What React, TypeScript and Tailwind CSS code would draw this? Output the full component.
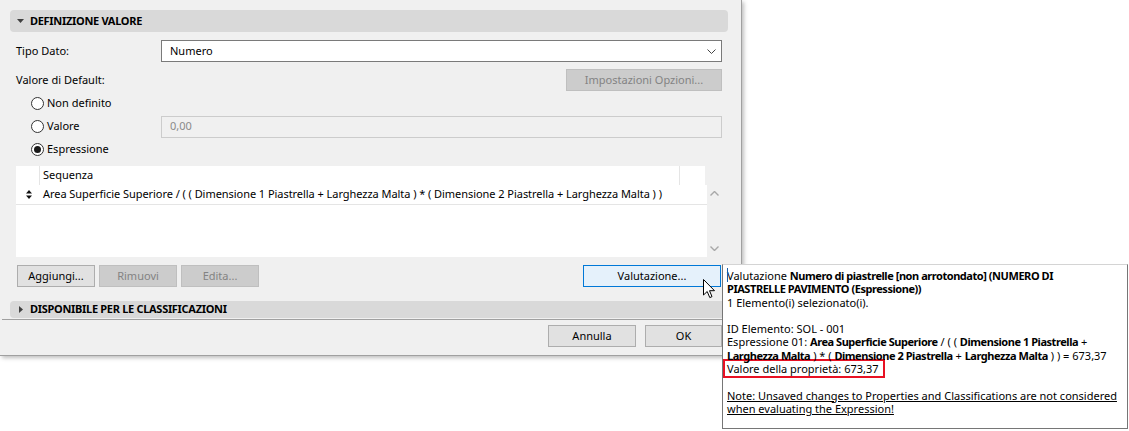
const Radio = ({ checked, label }: { checked?: boolean; label: string }) => (
  <div className="flex items-center gap-[3px] pl-[15px]">
    <span className="flex h-[13px] w-[13px] items-center justify-center rounded-full border border-[#333] bg-white">
      {checked && <span className="h-[7px] w-[7px] rounded-full bg-[#1a1a1a]" />}
    </span>
    <span>{label}</span>
  </div>
);

const Btn = ({
  label,
  width,
  disabled,
  focused,
}: {
  label: string;
  width: string;
  disabled?: boolean;
  focused?: boolean;
}) => {
  let look = "bg-[#e1e1e1] border-[#adadad] text-black";
  if (disabled) look = "bg-[#cccccc] border-[#bfbfbf] text-[#838383]";
  if (focused) look = "bg-[#e5f1fb] border-[#0078d7] text-black";
  return (
    <div className={`flex h-[22px] items-center justify-center border ${look} ${width}`}>
      {label}
    </div>
  );
};

const SectionHeader = ({ open, title, h }: { open?: boolean; title: string; h: string }) => (
  <div className={`ml-[-6px] mr-[-6px] flex items-center rounded-[4px] bg-[#d9d9d9] pl-[7px] ${h}`}>
    {open ? (
      <svg width="7" height="4" viewBox="0 0 7 4" className="mr-[6px]">
        <path d="M0 0 H7 L3.5 4 Z" fill="#404040" />
      </svg>
    ) : (
      <svg width="4" height="7" viewBox="0 0 4 7" className="ml-[2px] mr-[7px]">
        <path d="M0 0 V7 L4 3.5 Z" fill="#404040" />
      </svg>
    )}
    <span className="text-[11px] font-bold tracking-[-0.3px] text-black">{title}</span>
  </div>
);

const B = ({ children }: { children: React.ReactNode }) => (
  <b className="tracking-[-0.45px]">{children}</b>
);

export default function App() {
  return (
    <div
      className="relative h-[431px] w-[1129px] overflow-hidden bg-white text-[11px] text-black"
      style={{ fontFamily: '"Noto Sans", sans-serif' }}
    >
      {/* dialog */}
      <div className="flex h-[356px] w-[742px] flex-col border-b border-r border-[#a0a0a0] bg-[#f0f0f0] pt-[10px] shadow-[2px_2px_4px_rgba(0,0,0,0.25)]">
        <div className="flex flex-col pl-[16px] pr-[19px]">
          <SectionHeader open title="DEFINIZIONE VALORE" h="h-[22px]" />

          <div className="mt-[8px] flex h-[22px] items-center">
            <span className="w-[145px]">Tipo Dato:</span>
            <div className="flex h-full flex-1 items-center justify-between border border-[#7a7a7a] bg-white pl-[8px] pr-[5px]">
              <span>Numero</span>
              <svg width="9" height="5" viewBox="0 0 9 5">
                <path d="M0.5 0.5 L4.5 4.5 L8.5 0.5" fill="none" stroke="#444" strokeWidth="1" />
              </svg>
            </div>
          </div>

          <div className="mt-[7px] flex h-[22px] items-center justify-between">
            <span>Valore di Default:</span>
            <Btn label="Impostazioni Opzioni..." width="w-[156px]" disabled />
          </div>

          <div className="mt-[1px] flex h-[23px] items-center">
            <Radio label="Non definito" />
          </div>
          <div className="flex h-[23px] items-center">
            <div className="w-[145px]">
              <Radio label="Valore" />
            </div>
            <div className="flex h-[22px] flex-1 items-center border border-[#cccccc] bg-[#f0f0f0] pl-[8px] text-[#8a8a8a]">
              0,00
            </div>
          </div>
          <div className="flex h-[23px] items-center">
            <Radio checked label="Espressione" />
          </div>

          {/* sequence list */}
          <div className="mt-[5px] flex h-[91px] flex-col">
            <div className="flex h-[19px] w-[689px] bg-white">
              <div className="w-[24px] border-r border-[#e5e5e5]" />
              <div className="flex w-[640px] items-center border-r border-[#e5e5e5] pl-[3px]">Sequenza</div>
            </div>
            <div className="flex flex-1">
              <div className="flex-1 bg-white">
                <div className="flex h-[20px] items-center border-b border-[#e5e5e5]">
                  <div className="flex w-[25px] justify-center">
                    <svg width="6" height="9" viewBox="0 0 6 9">
                      <path d="M0 3.5 L3 0 L6 3.5 Z M0 5.5 L3 9 L6 5.5 Z" fill="#111" />
                    </svg>
                  </div>
                  <span className="pl-[2px] tracking-[-0.05px]">
                    Area Superficie Superiore / ( ( Dimensione 1 Piastrella + Larghezza Malta ) * ( Dimensione 2
                    Piastrella + Larghezza Malta ) )
                  </span>
                </div>
              </div>
              <div className="flex w-[15px] flex-col items-center justify-between py-[6px]">
                <svg width="9" height="5" viewBox="0 0 9 5">
                  <path d="M0.5 4.5 L4.5 0.5 L8.5 4.5" fill="none" stroke="#a8a8a8" strokeWidth="1.4" />
                </svg>
                <svg width="9" height="5" viewBox="0 0 9 5">
                  <path d="M0.5 0.5 L4.5 4.5 L8.5 0.5" fill="none" stroke="#a8a8a8" strokeWidth="1.4" />
                </svg>
              </div>
            </div>
          </div>

          <div className="mt-[8px] flex items-center gap-[4px] pl-[1px]">
            <Btn label="Aggiungi..." width="w-[78px]" />
            <Btn label="Rimuovi" width="w-[78px]" disabled />
            <Btn label="Edita..." width="w-[78px]" disabled />
            <div className="ml-auto mr-[1px]">
              <Btn label="Valutazione..." width="w-[138px]" focused />
            </div>
          </div>

          <div className="mt-[14px]">
            <SectionHeader title="DISPONIBILE PER LE CLASSIFICAZIONI" h="h-[17px]" />
          </div>
        </div>

        <div className="mt-[1px] ml-[2px] h-[1px] bg-[#a0a0a0]" />

        <div className="mt-[5px] flex justify-end gap-[9px] pr-[19px]">
          <Btn label="Annulla" width="w-[88px]" />
          <Btn label="OK" width="w-[77px]" />
        </div>
      </div>

      {/* mouse pointer */}
      <svg className="absolute left-[703px] top-[279px]" width="13" height="20" viewBox="0 0 13 20">
        <path
          d="M0.5 0.5 V16 L4.2 12.5 L6.8 18.6 L9 17.6 L6.5 11.7 L11.5 11.7 Z"
          fill="#fff"
          stroke="#000"
          strokeWidth="1"
          strokeLinejoin="round"
        />
      </svg>

      {/* evaluation popup */}
      <div className="absolute left-[722px] top-[264px] h-[165px] w-[406px] border border-[#767676] border-t-[#d4d4d4] bg-white pl-[4px] pt-[4px] leading-[13.3px] whitespace-nowrap">
        <span className="absolute left-[4px] top-[3px] h-[14px] w-px bg-[#1b5fa8]" />
        <div>
          Valutazione <B>Numero di piastrelle [non arrotondato] (NUMERO DI</B>
        </div>
        <div>
          <B>PIASTRELLE PAVIMENTO (Espressione))</B>
        </div>
        <div>1 Elemento(i) selezionato(i).</div>
        <div className="h-[13.3px]" />
        <div>ID Elemento: SOL - 001</div>
        <div>
          Espressione 01: <B>Area Superficie Superiore</B> / ( ( <B>Dimensione 1 Piastrella</B> +
        </div>
        <div>
          <B>Larghezza Malta</B> ) * ( <B>Dimensione 2 Piastrella</B> + <B>Larghezza Malta</B> ) ) = 673,37
        </div>
        <div className="ml-[-4px] mt-[-3px] mb-[-3px] w-[162px] border-2 border-[#e81123] py-[1px] pl-[2px]">
          Valore della proprietà: 673,37
        </div>
        <div className="h-[13.3px]" />
        <div className="underline">Note: Unsaved changes to Properties and Classifications are not considered</div>
        <div className="underline">when evaluating the Expression!</div>
      </div>
    </div>
  );
}
